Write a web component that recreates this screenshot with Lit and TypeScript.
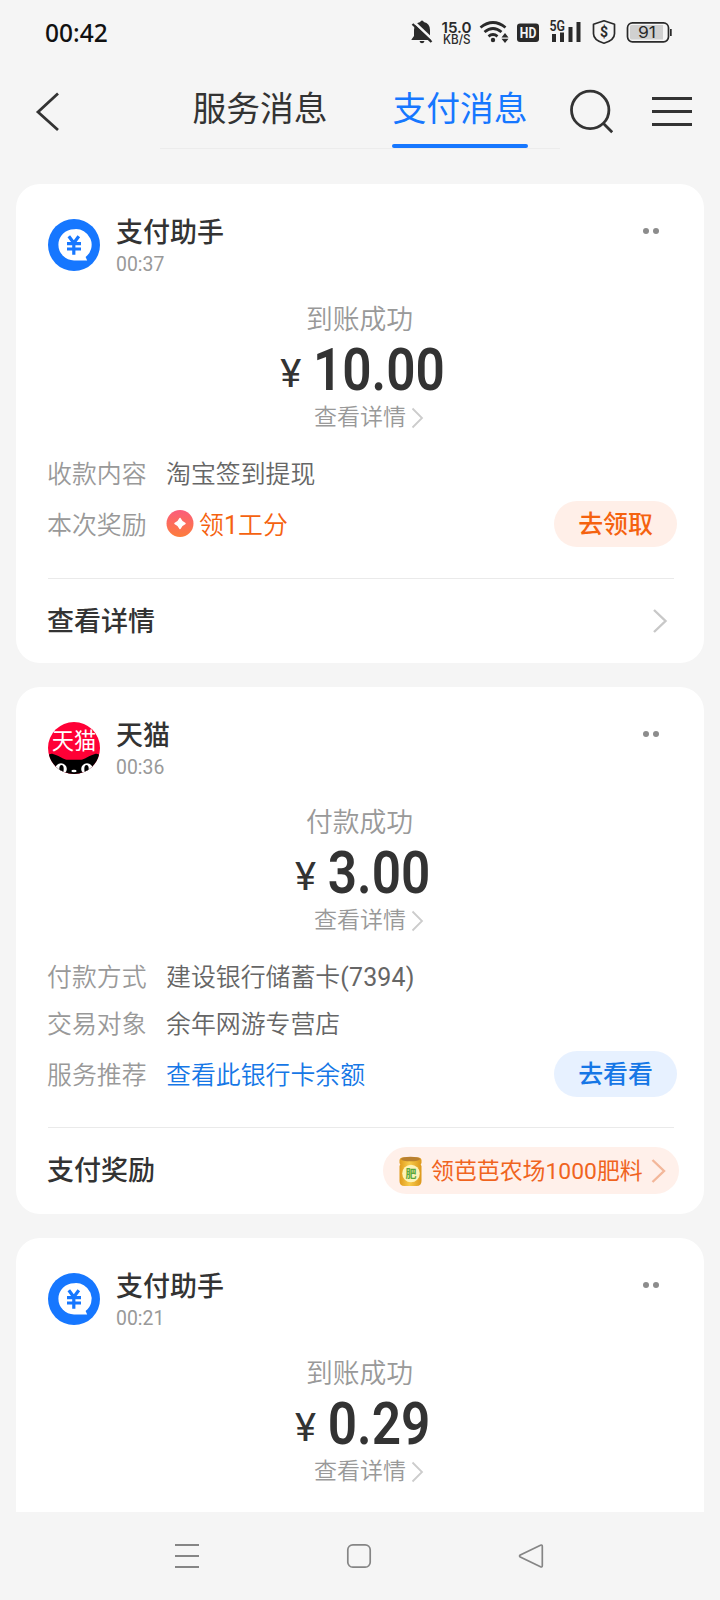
import { LitElement, html, svg, css, nothing } from "lit";
import { customElement, property } from "lit/decorators.js";

interface Row {
  label: string;
  value: string;
  tone?: "orange" | "blue";
  coin?: boolean;
  action?: string;
}
interface Message {
  avatar: "pay" | "tmall";
  name: string;
  time: string;
  status: string;
  amount: string;
  rows: Row[];
  footer?: string;
  reward?: string;
}

const messages: Message[] = [
  {
    avatar: "pay", name: "支付助手", time: "00:37", status: "到账成功", amount: "10.00",
    rows: [
      { label: "收款内容", value: "淘宝签到提现" },
      { label: "本次奖励", value: "领1工分", tone: "orange", coin: true, action: "去领取" },
    ],
    footer: "查看详情",
  },
  {
    avatar: "tmall", name: "天猫", time: "00:36", status: "付款成功", amount: "3.00",
    rows: [
      { label: "付款方式", value: "建设银行储蓄卡(7394)" },
      { label: "交易对象", value: "余年网游专营店" },
      { label: "服务推荐", value: "查看此银行卡余额", tone: "blue", action: "去看看" },
    ],
    footer: "支付奖励", reward: "领芭芭农场1000肥料",
  },
  { avatar: "pay", name: "支付助手", time: "00:21", status: "到账成功", amount: "0.29", rows: [] },
];

const payAvatar = svg`
  <circle cx="26" cy="26" r="26" fill="#1677ff"/>
  <path d="M26 10.200a15.600 15.600 0 1 0 0 31.200h13.200l-1.600-3.400A15.600 15.600 0 0 0 26 10.200z" fill="#fff"/>
  <path d="M20.800 17.200l5 6.800 5-6.800M19 24.600h14M19 30h14M25.800 24v11.800" fill="none" stroke="#1677ff" stroke-width="3.200"/>`;

const tmallAvatar = svg`
  <defs><clipPath id="disc"><circle cx="26" cy="26" r="26"/></clipPath></defs>
  <g clip-path="url(#disc)">
    <rect width="52" height="52" fill="#ff0036"/>
    <path d="M0 34c1-2 3-2.500 5-2 4 1 7 3 10 4.500 2 1 3 1.200 5 1.200h12c2 0 3-.2 5-1.200 3-1.500 6-3.500 10-4.500 2-.5 4 0 5 2v18H0z" fill="#000"/>
    <circle cx="13" cy="47" r="5.800" fill="#fff"/><circle cx="39" cy="47" r="5.800" fill="#fff"/>
    <path d="M4 42l6 10H4zM48 42l-6 10h6z" fill="#fff"/>
    <ellipse cx="13.500" cy="47" rx="2.200" ry="4" fill="#000"/><ellipse cx="38.500" cy="47" rx="2.200" ry="4" fill="#000"/>
    <ellipse cx="26" cy="49" rx="2.600" ry="1.200" fill="#fff"/>
    <text x="26" y="26.800" text-anchor="middle" class="logo-text">天猫</text>
  </g>`;

@customElement("message-card")
export class MessageCard extends LitElement {
  @property({ attribute: false }) message!: Message;

  static styles = css`
    :host { display: block; flex: none; background: #fff; border-radius: 24px; padding: 0 30px 0 31px; font-family: Roboto, "Noto Sans CJK SC", sans-serif; }
    .head { display: flex; height: 116px; padding-top: 35px; box-sizing: border-box; }
    .avatar { width: 52px; height: 52px; flex: none; margin-left: 1px; }
    .logo-text { font: 400 22.300px "Noto Sans CJK SC", sans-serif; fill: #fff; }
    .who { margin-left: 16px; flex: 1; margin-top: -5px; }
    .name { font-size: 27px; line-height: 38px; height: 36px; font-weight: 500; color: #333; }
    .time { font: 400 19.400px/29px Roboto, sans-serif; color: #999; }
    .more { width: 16px; height: 6px; margin: 9px 15px 0 0; }
    .summary { display: flex; flex-direction: column; align-items: center; height: 150px; padding-right: 2px; box-sizing: border-box; }
    .status { font-size: 26.800px; line-height: 41px; height: 38px; color: #999; font-weight: 350; }
    .amount { display: flex; align-items: baseline; height: 60px; line-height: 60px; color: #333; margin: 2px 0 0 6px; transform: scaleX(.87); font-size: 59px; font-weight: 600; }
    .yen { font-size: 39px; font-weight: 450; margin-right: 17px; transform: translateY(-3px) scaleX(1.180); transform-origin: left center; }
    .detail { display: flex; align-items: center; gap: 5px; font-size: 23px; line-height: 36px; color: #999; font-weight: 350; margin-left: 19px; }
    .row { display: flex; align-items: center; height: 47px; font-size: 24.900px; color: #666; font-weight: 350; white-space: nowrap; }
    .row.tall { height: 54px; margin-right: -3px; }
    .label { width: 119px; color: #999; padding-bottom: 4px; }
    .value { flex: 1; display: flex; align-items: center; }
    .words { padding-bottom: 4px; }
    .tall .label, .tall .words { padding-bottom: 3px; }
    .latin { font-weight: 400; letter-spacing: .2px; }
    .coin { width: 28px; height: 28px; margin-right: 5px; }
    .orange { color: #f5620f; }
    .blue { color: #1677e6; }
    .action { width: 123px; height: 46px; box-sizing: border-box; padding-bottom: 5px; border-radius: 23px; display: grid; place-items: center; font-weight: 500; }
    .action.orange { background: #ffefe8; }
    .action.blue { background: #e7f1ff; }
    .rule { height: 1px; background: #eaeaea; margin: 27px 0 0 1px; }
    .foot { display: flex; align-items: center; justify-content: space-between; height: 84px; font-size: 27px; font-weight: 500; color: #333; }
    .title { padding-bottom: 4px; }
    .foot.rich { height: 86px; }
    .rich .title { padding-bottom: 6px; }
    .rule.rich { margin-top: 26px; }
    .arrow { width: 16px; height: 26px; margin-right: 6px; }
    .pill { display: flex; align-items: center; width: 296px; height: 47px; border-radius: 24px; background: #fff0ea; color: #f0641e; font-size: 22.900px; font-weight: 400; margin: -1px -5px 0 0; white-space: nowrap; box-sizing: border-box; padding-left: 15px; }
    .can { width: 25px; height: 32px; margin-right: 8px; }
    .can-text { font: 700 11px "Noto Sans CJK SC", sans-serif; fill: #5da83a; }
    .pill-arrow { width: 15px; height: 26px; margin-left: 8px; }
  `;

  private mixed(text: string) {
    return text.split(/([0-9()]+)/).map((part, i) => (i % 2 ? html`<span class="latin">${part}</span>` : part));
  }

  private row(r: Row) {
    return html`<div class="row ${r.action ? "tall" : ""}">
      <span class="label">${r.label}</span>
      <span class="value ${r.tone ?? ""}">
        ${r.coin ? html`<svg class="coin" viewBox="0 0 28 28">
          <defs><linearGradient id="g" x1="0" y1="0" x2="0" y2="1"><stop offset="0" stop-color="#fb5c7c"/><stop offset="1" stop-color="#fd7d3c"/></linearGradient></defs>
          <circle cx="14" cy="13.500" r="13.500" fill="url(#g)"/>
          <path d="M14 8.500q1.500 3.500 5 5-3.500 1.500-5 5-1.500-3.500-5-5 3.500-1.500 5-5z" fill="#fff" stroke="#fff" stroke-width="1.500" stroke-linejoin="round"/>
        </svg>` : nothing}<span class="words">${this.mixed(r.value)}</span></span>
      ${r.action ? html`<span class="action ${r.tone ?? ""}">${r.action}</span>` : nothing}
    </div>`;
  }

  private foot(m: Message) {
    const rich = m.reward ? "rich" : "";
    return html`<div class="rule ${rich}"></div>
      <div class="foot ${rich}">
        <span class="title">${m.footer}</span>
        ${m.reward
          ? html`<span class="pill">
              <svg class="can" viewBox="0 0 25 32">
                <defs><linearGradient id="c" x1="0" x2="1"><stop offset="0" stop-color="#e09a1c"/><stop offset=".45" stop-color="#f8cb4a"/><stop offset="1" stop-color="#dc971b"/></linearGradient></defs>
                <path d="M1.500 5Q1.500 3 4 2.500h17q2.500.5 2.500 2.500v3l-.8 1.500.8 1.500v15q0 5-5 5h-12q-5 0-5-5v-15l.8-1.500-.8-1.500z" fill="url(#c)"/>
                <ellipse cx="12.500" cy="4" rx="9.500" ry="2.300" fill="#b9802f"/>
                <circle cx="13" cy="18.500" r="8.800" fill="#fdf3b8"/>
                <text x="13" y="22.500" text-anchor="middle" class="can-text">肥</text>
              </svg><span class="words">${m.reward}</span>
              <svg class="pill-arrow" viewBox="0 0 15 26" fill="none" stroke="#f3b79a" stroke-width="2.400"><path d="M1.500 2l11.500 11-11.500 11"/></svg>
            </span>`
          : html`<svg class="arrow" viewBox="0 0 16 26" fill="none" stroke="#c8c8c8" stroke-width="2.400"><path d="M2 2l11.500 11L2 24"/></svg>`}
      </div>`;
  }

  render() {
    const m = this.message;
    return html`
      <div class="head">
        <svg class="avatar" viewBox="0 0 52 52">${m.avatar === "pay" ? payAvatar : tmallAvatar}</svg>
        <div class="who"><div class="name">${m.name}</div><div class="time">${m.time}</div></div>
        <svg class="more" viewBox="0 0 16 6" fill="#8c8c8c"><circle cx="3" cy="3" r="3"/><circle cx="13" cy="3" r="3"/></svg>
      </div>
      <div class="summary">
        <div class="status">${m.status}</div>
        <div class="amount"><span class="yen">¥</span><span>${m.amount}</span></div>
        <div class="detail">${"查看详情"}<svg width="13" height="22" viewBox="0 0 13 22" fill="none" stroke="#ccc" stroke-width="1.800"><path d="M1.500 1.500L11 11l-9.500 9.500"/></svg></div>
      </div>
      ${m.rows.map((r) => this.row(r))}
      ${m.footer ? this.foot(m) : nothing}
    `;
  }
}

@customElement("app-root")
export class AppRoot extends LitElement {
  static styles = css`
    :host { display: flex; flex-direction: column; width: 720px; height: 1600px; overflow: hidden; background: #f5f5f5; font-family: "Noto Sans CJK SC", sans-serif; color: #333; }
    .statusbar { display: flex; justify-content: space-between; height: 64px; flex: none; }
    .clock { font: 500 24.500px/65px "Noto Sans", sans-serif; color: #111; padding-left: 45px; }
    .indicators { width: 320px; height: 64px; }
    .speed { font: 600 15px Inter, sans-serif; }
    .unit { font: 500 12.500px Inter, sans-serif; }
    .hd { font: 700 14.500px Roboto, sans-serif; fill: #f5f5f5; }
    .gen { font: 600 14px Roboto, sans-serif; }
    .coin { font: 700 14px Roboto, sans-serif; }
    .level { font: 400 16px Inter, sans-serif; }
    .topbar { display: flex; height: 120px; flex: none; }
    .back { width: 160px; height: 100px; }
    .tabs { display: flex; width: 400px; height: 85px; box-sizing: border-box; border-bottom: 1px solid #ececec; font-size: 33.800px; padding-left: 32px; gap: 64px; }
    .tab { width: 136px; height: 84px; box-sizing: border-box; line-height: 86px; text-align: center; white-space: nowrap; font-weight: 400; display: flex; flex-direction: column; }
    .tab.on { color: #1677ff; }
    .tab.on::after { content: ""; height: 4px; flex: none; margin-top: -6px; border-radius: 2px; background: #1677ff; }
    .tools { width: 160px; height: 100px; }
    .feed { display: flex; flex-direction: column; gap: 24px; padding: 0 16px; height: 1328px; overflow: hidden; flex: none; }
    .feed > :last-child { min-height: 300px; }
    .nav { flex: 1; display: flex; align-items: center; justify-content: center; gap: 144px; padding-right: 2px; }
    .nav svg { width: 28px; height: 28px; }
  `;

  render() {
    return html`
      <div class="statusbar">
        <span class="clock">00:42</span>
        <svg class="indicators" viewBox="400 0 320 64" fill="#2a2a2a">
          <path d="M422 20.500q1.500 0 1.800 1.500 6.200 1.600 6.200 8v6l2.500 3.500v.5h-21v-.5l2.500-3.500v-6q0-6.400 6.200-8 .3-1.500 1.800-1.500z"/>
          <path d="M419.500 41h5q-.5 2.300-2.500 2.300t-2.500-2.300z"/>
          <path d="M414.500 22.500l18.500 17.500" stroke="#f5f5f5" stroke-width="2.500"/>
          <path d="M412.500 24l19 18" stroke="#2a2a2a" stroke-width="2.400"/>
          <text x="441.500" y="33" textLength="30" lengthAdjust="spacingAndGlyphs" class="speed">15.0</text>
          <text x="443" y="44.300" textLength="27.500" lengthAdjust="spacingAndGlyphs" class="unit">KB/S</text>
          <g fill="none" stroke="#2a2a2a" stroke-width="2.800"><path d="M480.500 27.500q12.500-10 25 0"/><path d="M484.500 32q8.500-7 17 0"/><path d="M488.500 36.300q4.500-3.500 9 0"/></g>
          <circle cx="493" cy="40" r="2.200"/>
          <path d="M505 33l3.500 4.500h-7zM505 43l3.500-4.200h-7z"/>
          <rect x="517" y="23.500" width="22" height="18.500" rx="3"/>
          <text x="519.800" y="38" textLength="16.500" lengthAdjust="spacingAndGlyphs" class="hd">HD</text>
          <text x="549.500" y="31" textLength="15.500" lengthAdjust="spacingAndGlyphs" class="gen">5G</text>
          <path d="M552 34h4v8h-4zM560 32.500h4V42h-4zM568.500 27h4v15h-4zM576.500 22h4v20h-4z"/>
          <path d="M604 20.800l10.500 3.400v9.500q0 6.500-10.500 9.500-10.500-3-10.500-9.500v-9.500z" fill="none" stroke="#2a2a2a" stroke-width="1.700" stroke-linejoin="round"/>
          <text x="604" y="37" text-anchor="middle" class="coin">$</text>
          <rect x="627.500" y="22.800" width="41" height="19" rx="5" fill="none" stroke="#2a2a2a" stroke-width="1.700"/>
          <path d="M631.500 25h31.500v14.500h-31.500q-1.500 0-1.500-1.500v-11.500q0-1.500 1.500-1.500z" fill="#d0d0d0"/>
          <path d="M670 29h1.700v7H670z"/>
          <text x="638" y="38" textLength="18" lengthAdjust="spacingAndGlyphs" class="level">91</text>
        </svg>
      </div>
      <div class="topbar">
        <svg class="back" viewBox="0 64 160 100" fill="none" stroke="#333" stroke-width="2.800"><path d="M58 93.500L38 112l20 18"/></svg>
        <div class="tabs"><div class="tab">服务消息</div><div class="tab on">支付消息</div></div>
        <svg class="tools" viewBox="560 64 160 100" fill="none" stroke="#333" stroke-width="2.800">
          <circle cx="590.200" cy="109.900" r="18.700"/><path d="M603 123l9.200 9.200M652 98.500h40M652 111.500h40M652 124.500h40"/>
        </svg>
      </div>
      <div class="feed">${messages.map((m) => html`<message-card .message=${m}></message-card>`)}</div>
      <div class="nav">
        <svg viewBox="0 0 28 28" stroke="#858585" stroke-width="1.800"><path d="M2 3h24M2 14h24M2 25h24"/></svg>
        <svg viewBox="0 0 28 28" fill="none" stroke="#858585" stroke-width="1.700"><rect x="2.800" y="2.800" width="22.400" height="22.400" rx="5"/></svg>
        <svg viewBox="0 0 28 28" fill="none" stroke="#858585" stroke-width="1.700"><path d="M23.500 3.200q1.800-.8 1.800 1.300v19q0 2.100-1.800 1.300L3.300 15q-1.500-1 0-2z"/></svg>
      </div>
    `;
  }
}
